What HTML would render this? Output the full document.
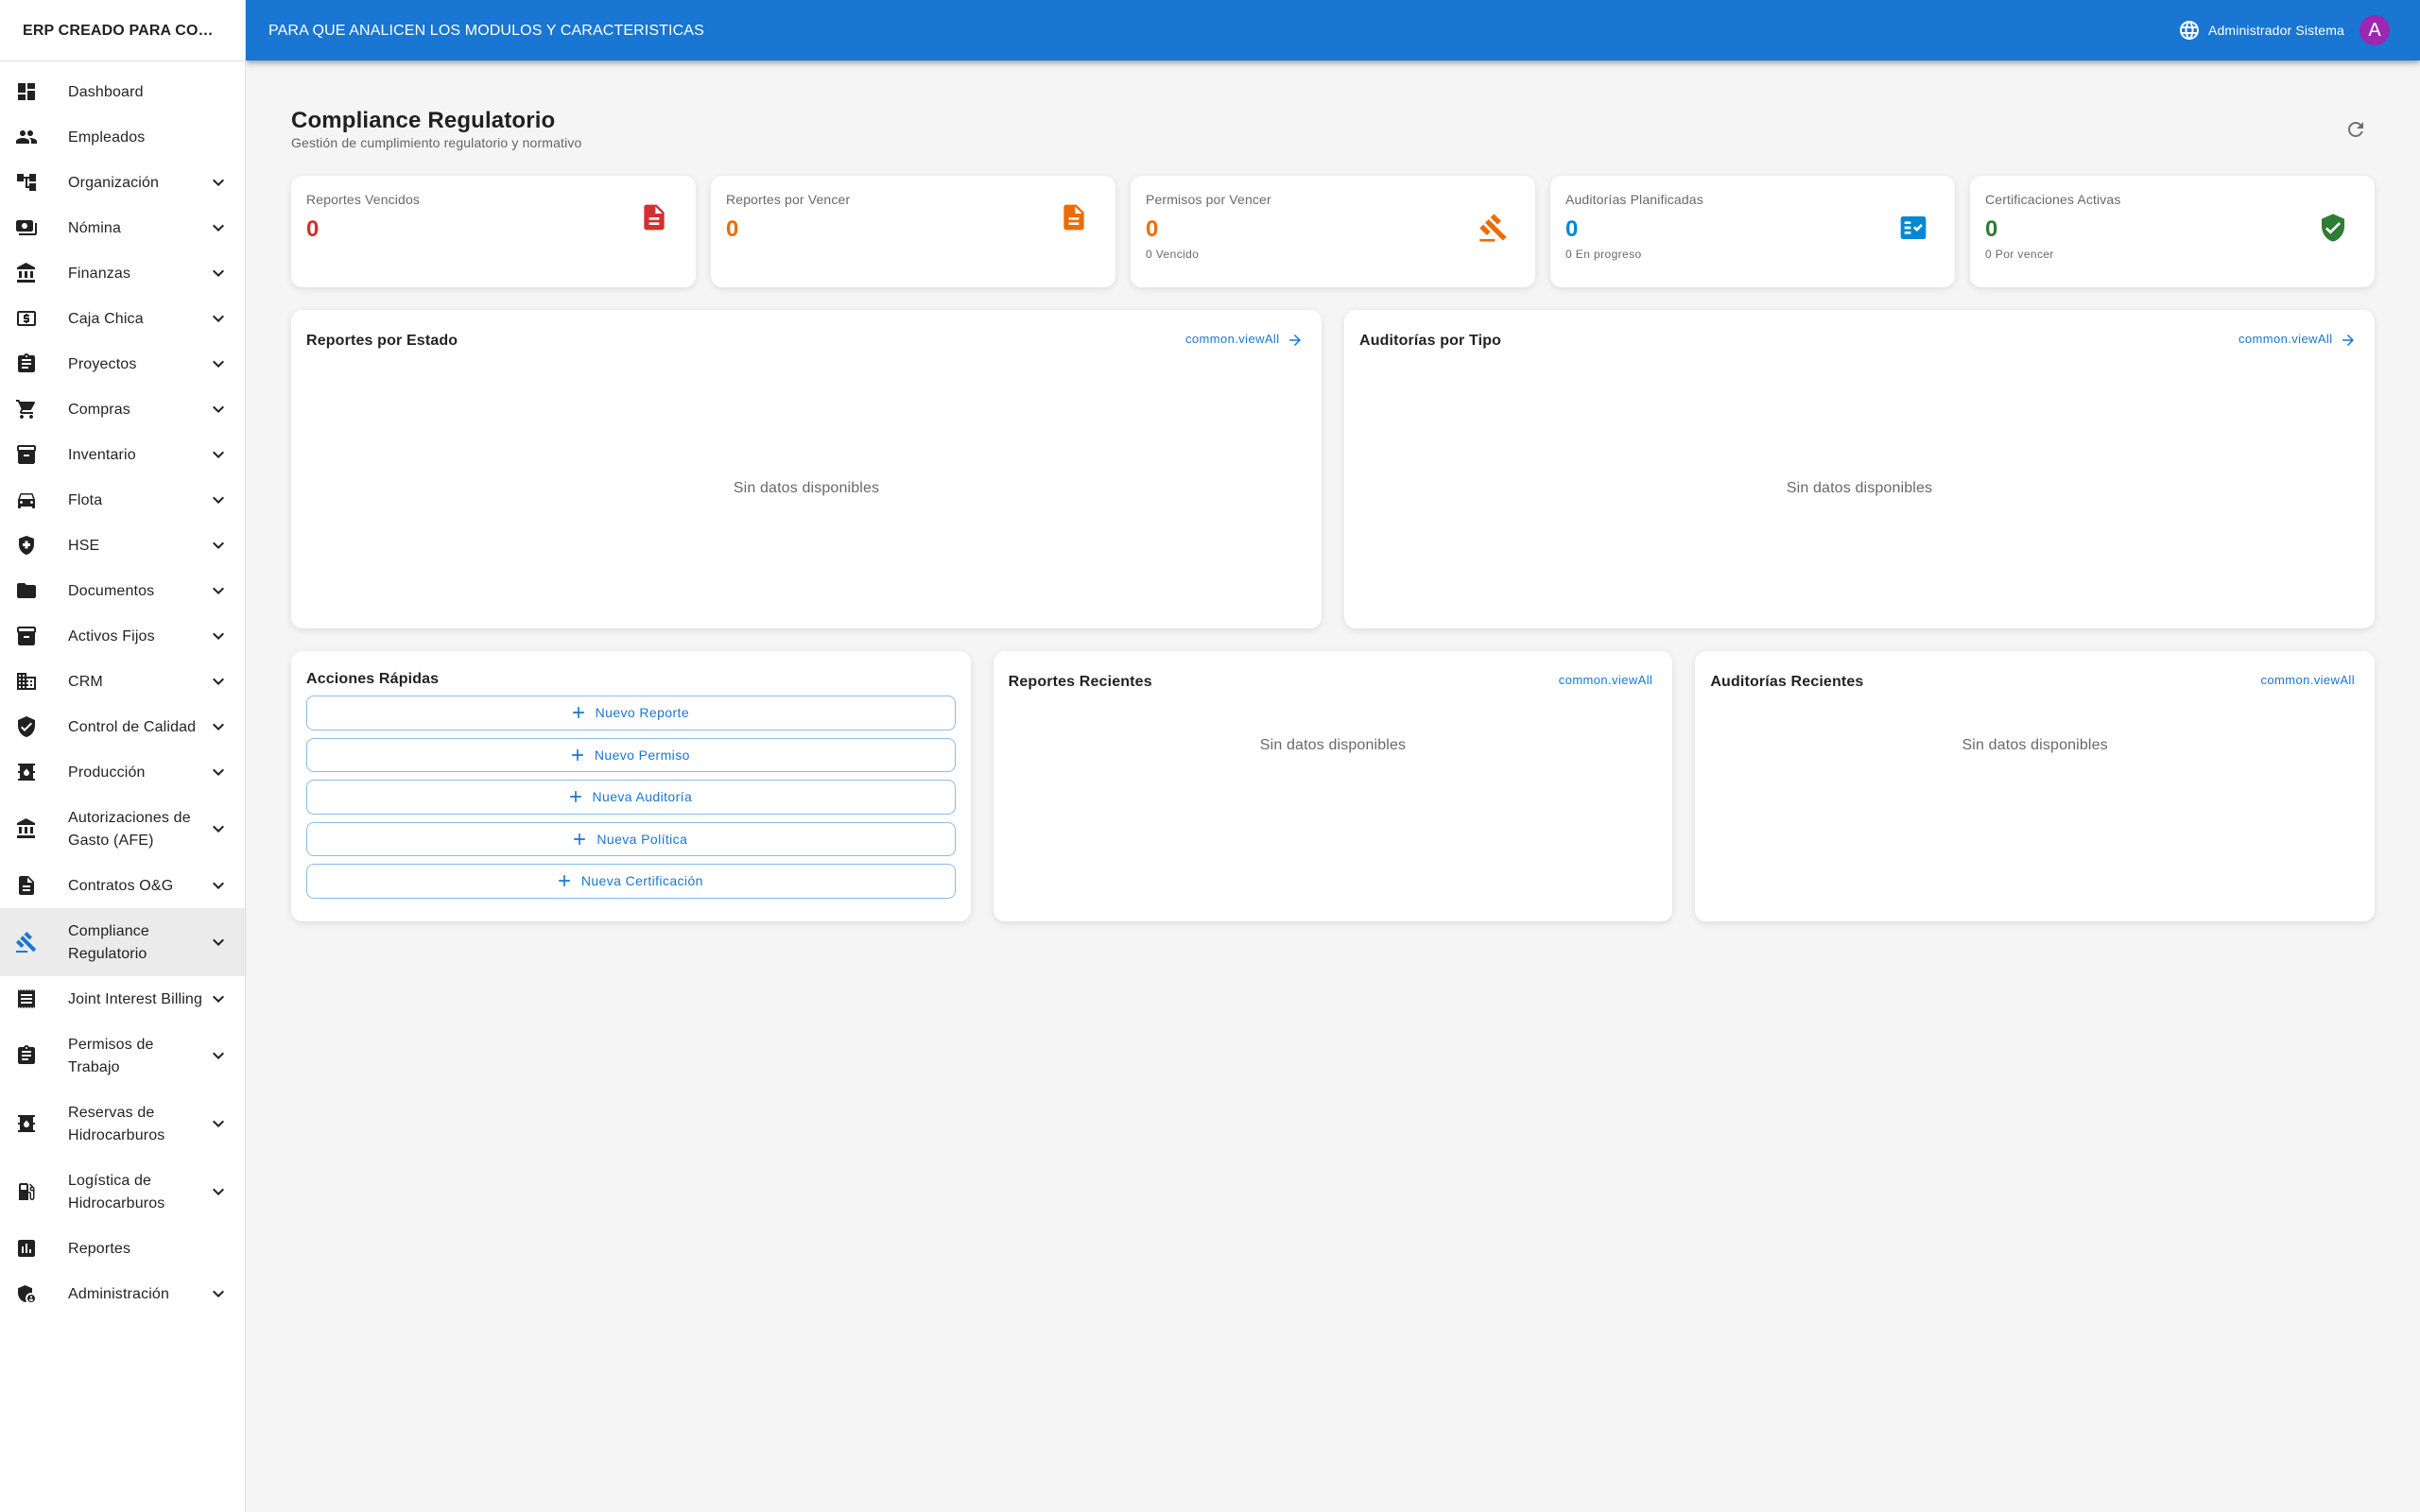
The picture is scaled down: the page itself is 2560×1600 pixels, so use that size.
<!DOCTYPE html>
<html lang="es">
<head>
<meta charset="utf-8">
<title>Compliance Regulatorio</title>
<style>
*{box-sizing:border-box;margin:0;padding:0}
html,body{width:2560px;height:1600px;overflow:hidden;background:#f5f5f5;font-family:"Liberation Sans",sans-serif;color:rgba(0,0,0,.87)}
svg{display:block;fill:currentColor}
.abs,.t{position:absolute}
.t{white-space:nowrap}
#side{position:absolute;left:0;top:0;width:260px;height:1600px;background:#fff;border-right:1px solid #e0e0e0;z-index:3}
#brand{position:absolute;left:0;top:0;width:259px;height:65px;border-bottom:1px solid #e0e0e0;padding-left:24px;line-height:65px;font-size:16px;font-weight:700;letter-spacing:.15px;white-space:nowrap}
#nav{position:absolute;left:0;top:73px;width:259px}
.i{position:relative;display:block;width:259px;height:48px}
.i.two{height:72px}
.i.sel{background:rgba(0,0,0,.08)}
.i .ic{position:absolute;left:16px;top:50%;margin-top:-12px;width:24px;height:24px;color:rgba(0,0,0,.87)}
.i.sel .ic{color:#1976d2}
.i .ch{position:absolute;left:219px;top:50%;margin-top:-12px;width:24px;height:24px;color:rgba(0,0,0,.87)}
.i .l{position:absolute;left:72px;top:13px;width:147px;font-size:16px;line-height:24px;letter-spacing:.15px}
.i .l.nw{white-space:nowrap}
#bar{position:absolute;left:260px;top:0;width:2300px;height:64px;background:#1976d2;color:#fff;box-shadow:0 2px 4px -1px rgba(0,0,0,.2),0 4px 5px 0 rgba(0,0,0,.14),0 1px 10px 0 rgba(0,0,0,.12);z-index:2}
.card{position:absolute;background:#fff;border-radius:12px;box-shadow:0 2px 8px rgba(0,0,0,.1)}
.lab{left:16px;top:15px;font-size:14px;line-height:20px;letter-spacing:.15px;color:rgba(0,0,0,.6)}
.num{left:16px;top:39px;font-size:24px;line-height:36px;font-weight:700}
.cap{left:16px;top:74px;font-size:12px;line-height:18px;letter-spacing:.4px;color:rgba(0,0,0,.6)}
.sic{position:absolute;left:368px;top:28px;width:32px;height:32px}
.sic.low{top:39px}
.h{font-size:16px;font-weight:700;line-height:24px;letter-spacing:.15px}
.va{font-size:13px;line-height:22px;letter-spacing:.4px;color:#1976d2}
.nd{font-size:16px;line-height:24px;letter-spacing:.15px;color:rgba(0,0,0,.6);text-align:center;left:0;right:0}
.btn{position:absolute;left:16px;width:686.67px;height:36.5px;border:1px solid rgba(25,118,210,.5);border-radius:8px;color:#1976d2;font-size:14px;line-height:34.5px;letter-spacing:.4px;display:flex;align-items:center;justify-content:center;padding-right:2px}
.btn svg{width:20px;height:20px;margin-right:8px;margin-left:-2px}
</style>
</head>
<body>
<svg width="0" height="0" style="position:absolute">
<defs>
<symbol id="dash" viewBox="0 0 24 24"><path d="M3 13h8V3H3v10zm0 8h8v-6H3v6zm10 0h8V11h-8v10zm0-18v6h8V3h-8z"/></symbol>
<symbol id="people" viewBox="0 0 24 24"><path d="M16 11c1.66 0 2.99-1.34 2.99-3S17.66 5 16 5c-1.66 0-3 1.34-3 3s1.34 3 3 3zm-8 0c1.66 0 2.99-1.34 2.99-3S9.66 5 8 5C6.34 5 5 6.34 5 8s1.34 3 3 3zm0 2c-2.33 0-7 1.17-7 3.5V19h14v-2.5c0-2.33-4.67-3.5-7-3.5zm8 0c-.29 0-.62.02-.97.05 1.16.84 1.97 1.97 1.97 3.45V19h6v-2.5c0-2.33-4.67-3.5-7-3.5z"/></symbol>
<symbol id="tree" viewBox="0 0 24 24"><path d="M22 11V3h-7v3H9V3H2v8h7V8h2v10h4v3h7v-8h-7v3h-2V8h2v3z"/></symbol>
<symbol id="pay" viewBox="0 0 24 24"><path d="M19 14V6c0-1.1-.9-2-2-2H3c-1.1 0-2 .9-2 2v8c0 1.1.9 2 2 2h14c1.1 0 2-.9 2-2zm-9-1c-1.66 0-3-1.34-3-3s1.34-3 3-3 3 1.34 3 3-1.34 3-3 3zm13-6v11c0 1.1-.9 2-2 2H4v-2h17V7h2z"/></symbol>
<symbol id="bank" viewBox="0 0 24 24"><path d="M4 10v7h3v-7H4zm6 0v7h3v-7h-3zM2 22h19v-3H2v3zm14-12v7h3v-7h-3zm-4.5-9L2 6v2h19V6l-9.5-5z"/></symbol>
<symbol id="atm" viewBox="0 0 24 24"><path d="M11 17h2v-1h1c.55 0 1-.45 1-1v-3c0-.55-.45-1-1-1h-3v-1h4V8h-2V7h-2v1h-1c-.55 0-1 .45-1 1v3c0 .55.45 1 1 1h3v1H9v2h2v1zm9-13H4c-1.11 0-1.99.89-1.99 2L2 18c0 1.11.89 2 2 2h16c1.11 0 2-.89 2-2V6c0-1.11-.89-2-2-2zm0 14H4V6h16v12z"/></symbol>
<symbol id="assign" viewBox="0 0 24 24"><path d="M19 3h-4.18C14.4 1.84 13.3 1 12 1c-1.3 0-2.4.84-2.82 2H5c-1.1 0-2 .9-2 2v14c0 1.1.9 2 2 2h14c1.1 0 2-.9 2-2V5c0-1.1-.9-2-2-2zm-7 0c.55 0 1 .45 1 1s-.45 1-1 1-1-.45-1-1 .45-1 1-1zm2 14H7v-2h7v2zm3-4H7v-2h10v2zm0-4H7V7h10v2z"/></symbol>
<symbol id="cart" viewBox="0 0 24 24"><path d="M7 18c-1.1 0-1.99.9-1.99 2S5.9 22 7 22s2-.9 2-2-.9-2-2-2zM1 2v2h2l3.6 7.59-1.35 2.45c-.16.28-.25.61-.25.96 0 1.1.9 2 2 2h12v-2H7.42c-.14 0-.25-.11-.25-.25l.03-.12.9-1.63h7.45c.75 0 1.41-.41 1.75-1.03l3.58-6.49c.08-.14.12-.31.12-.48 0-.55-.45-1-1-1H5.21l-.94-2H1zm16 16c-1.1 0-1.99.9-1.99 2s.89 2 1.99 2 2-.9 2-2-.9-2-2-2z"/></symbol>
<symbol id="inv" viewBox="0 0 24 24"><path d="M20 2H4c-1 0-2 .9-2 2v3.01c0 .72.43 1.34 1 1.69V20c0 1.1 1.1 2 2 2h14c.9 0 2-.9 2-2V8.7c.57-.35 1-.97 1-1.69V4c0-1.1-1-2-2-2zm-5 12H9v-2h6v2zm5-7H4V4l16-.02V7z"/></symbol>
<symbol id="car" viewBox="0 0 24 24"><path d="M18.92 6.01C18.72 5.42 18.16 5 17.5 5h-11c-.66 0-1.21.42-1.42 1.01L3 12v8c0 .55.45 1 1 1h1c.55 0 1-.45 1-1v-1h12v1c0 .55.45 1 1 1h1c.55 0 1-.45 1-1v-8l-2.08-5.99zM6.5 16c-.83 0-1.5-.67-1.5-1.5S5.67 13 6.5 13s1.5.67 1.5 1.5S7.33 16 6.5 16zm11 0c-.83 0-1.5-.67-1.5-1.5s.67-1.5 1.5-1.5 1.5.67 1.5 1.5-.67 1.5-1.5 1.5zM5 11l1.5-4.5h11L19 11H5z"/></symbol>
<symbol id="hse" viewBox="0 0 24 24"><path d="M10.5 13H8v-3h2.5V7.5h3V10H16v3h-2.5v2.5h-3V13zM12 2 4 5v6.09c0 5.05 3.41 9.76 8 10.91 4.59-1.15 8-5.86 8-10.91V5l-8-3z"/></symbol>
<symbol id="folder" viewBox="0 0 24 24"><path d="M10 4H4c-1.1 0-1.99.9-1.99 2L2 18c0 1.1.9 2 2 2h16c1.1 0 2-.9 2-2V8c0-1.1-.9-2-2-2h-8l-2-2z"/></symbol>
<symbol id="biz" viewBox="0 0 24 24"><path d="M12 7V3H2v18h20V7H12zM6 19H4v-2h2v2zm0-4H4v-2h2v2zm0-4H4V9h2v2zm0-4H4V5h2v2zm4 12H8v-2h2v2zm0-4H8v-2h2v2zm0-4H8V9h2v2zm0-4H8V5h2v2zm10 12h-8v-2h2v-2h-2v-2h2v-2h-2V9h8v10zm-2-8h-2v2h2v-2zm0 4h-2v2h2v-2z"/></symbol>
<symbol id="verified" viewBox="0 0 24 24"><path d="M12 1 3 5v6c0 5.55 3.84 10.74 9 12 5.16-1.26 9-6.45 9-12V5l-9-4zm-2 16-4-4 1.41-1.41L10 14.17l6.59-6.59L18 9l-8 8z"/></symbol>
<symbol id="barrel" viewBox="0 0 24 24"><path fill-rule="evenodd" d="M21 13v-2h-2V5h2V3H3v2h2v6H3v2h2v6H3v2h18v-2h-2v-6h2zm-9 3c-1.66 0-3-1.32-3-2.95 0-1.3.52-1.67 3-4.55 2.47 2.86 3 3.24 3 4.55 0 1.63-1.34 2.95-3 2.95z"/></symbol>
<symbol id="doc" viewBox="0 0 24 24"><path d="M14 2H6c-1.1 0-1.99.9-1.99 2L4 20c0 1.1.89 2 1.99 2H18c1.1 0 2-.9 2-2V8l-6-6zm2 16H8v-2h8v2zm0-4H8v-2h8v2zm-3-5V3.5L18.5 9H13z"/></symbol>
<symbol id="gavel" viewBox="0 0 24 24"><path d="M1 21h12v2H1zM5.245 8.07l2.83-2.827 14.14 14.142-2.828 2.828zM12.317 1l5.657 5.656-2.83 2.83-5.654-5.66zM3.825 9.485l5.657 5.657-2.828 2.828-5.657-5.657z"/></symbol>
<symbol id="receipt" viewBox="0 0 24 24"><path d="M18 17H6v-2h12v2zm0-4H6v-2h12v2zm0-4H6V7h12v2zM3 22l1.5-1.5L6 22l1.5-1.5L9 22l1.5-1.5L12 22l1.5-1.5L15 22l1.5-1.5L18 22l1.5-1.5L21 22V2l-1.5 1.5L18 2l-1.5 1.5L15 2l-1.5 1.5L12 2l-1.5 1.5L9 2 7.5 3.5 6 2 4.5 3.5 3 2v20z"/></symbol>
<symbol id="gas" viewBox="0 0 24 24"><path d="M19.77 7.23l.01-.01-3.72-3.72L15 4.56l2.11 2.11c-.94.36-1.61 1.26-1.61 2.33 0 1.38 1.12 2.5 2.5 2.5.36 0 .69-.08 1-.21v7.21c0 .55-.45 1-1 1s-1-.45-1-1V14c0-1.1-.9-2-2-2h-1V5c0-1.1-.9-2-2-2H6c-1.1 0-2 .9-2 2v16h10v-7.5h1.5v5c0 1.38 1.12 2.5 2.5 2.5s2.5-1.12 2.5-2.5V9c0-.69-.28-1.32-.73-1.77zM12 10H6V5h6v5zm6 0c-.55 0-1-.45-1-1s.45-1 1-1 1 .45 1 1-.45 1-1 1z"/></symbol>
<symbol id="assess" viewBox="0 0 24 24"><path d="M19 3H5c-1.1 0-2 .9-2 2v14c0 1.1.9 2 2 2h14c1.1 0 2-.9 2-2V5c0-1.1-.9-2-2-2zM9 17H7v-7h2v7zm4 0h-2V7h2v10zm4 0h-2v-4h2v4z"/></symbol>
<symbol id="admin" viewBox="0 0 24 24"><path d="M17 11c.34 0 .67.04 1 .09V6.27L10.5 3 3 6.27v4.91c0 4.54 3.2 8.79 7.5 9.82.55-.13 1.08-.32 1.6-.55-.69-.98-1.1-2.17-1.1-3.45 0-3.31 2.69-6 6-6z"/><path d="M17 13c-2.21 0-4 1.79-4 4s1.79 4 4 4 4-1.79 4-4-1.79-4-4-4zm0 1.38c.62 0 1.12.51 1.12 1.12s-.51 1.12-1.12 1.12-1.12-.51-1.12-1.12.5-1.12 1.12-1.12zm0 5.37c-.93 0-1.74-.46-2.24-1.17.05-.72 1.51-1.08 2.24-1.08s2.19.36 2.24 1.08c-.5.71-1.31 1.17-2.24 1.17z"/></symbol>
<symbol id="fact" viewBox="0 0 24 24"><path d="M20 3H4c-1.1 0-2 .9-2 2v14c0 1.1.9 2 2 2h16c1.1 0 2-.9 2-2V5c0-1.1-.9-2-2-2zM10 17H5v-2h5v2zm0-4H5v-2h5v2zm0-4H5V7h5v2zm4.82 6L12 12.16l1.41-1.41 1.41 1.42L17.99 9l1.42 1.42L14.82 15z"/></symbol>
<symbol id="more" viewBox="0 0 24 24"><path d="M16.59 8.59 12 13.17 7.41 8.59 6 10l6 6 6-6z"/></symbol>
<symbol id="refresh" viewBox="0 0 24 24"><path d="M17.65 6.35C16.2 4.9 14.21 4 12 4c-4.42 0-7.99 3.58-7.99 8s3.57 8 7.99 8c3.73 0 6.84-2.55 7.73-6h-2.08c-.82 2.33-3.04 4-5.65 4-3.31 0-6-2.69-6-6s2.69-6 6-6c1.66 0 3.14.69 4.22 1.78L13 11h7V4l-2.35 2.35z"/></symbol>
<symbol id="lang" viewBox="0 0 24 24"><path d="M11.99 2C6.47 2 2 6.48 2 12s4.47 10 9.99 10C17.52 22 22 17.52 22 12S17.52 2 11.99 2zm6.93 6h-2.95c-.32-1.25-.78-2.45-1.38-3.56 1.84.63 3.37 1.91 4.33 3.56zM12 4.04c.83 1.2 1.48 2.53 1.91 3.96h-3.82c.43-1.43 1.08-2.76 1.91-3.96zM4.26 14C4.1 13.36 4 12.69 4 12s.1-1.36.26-2h3.38c-.08.66-.14 1.32-.14 2 0 .68.06 1.34.14 2H4.26zm.82 2h2.95c.32 1.25.78 2.45 1.38 3.56-1.84-.63-3.37-1.9-4.33-3.56zm2.95-8H5.08c.96-1.66 2.49-2.93 4.33-3.56C8.81 5.55 8.35 6.75 8.03 8zM12 19.96c-.83-1.2-1.48-2.53-1.91-3.96h3.82c-.43 1.43-1.08 2.76-1.91 3.96zM14.34 14H9.66c-.09-.66-.16-1.32-.16-2 0-.68.07-1.35.16-2h4.68c.09.65.16 1.32.16 2 0 .68-.07 1.34-.16 2zm.25 5.56c.6-1.11 1.06-2.31 1.38-3.56h2.95c-.96 1.65-2.49 2.93-4.33 3.56zM16.36 14c.08-.66.14-1.32.14-2 0-.68-.06-1.34-.14-2h3.38c.16.64.26 1.31.26 2s-.1 1.36-.26 2h-3.38z"/></symbol>
<symbol id="arrow" viewBox="0 0 24 24"><path d="M12 4l-1.41 1.41L16.17 11H4v2h12.17l-5.58 5.59L12 20l8-8z"/></symbol>
<symbol id="add" viewBox="0 0 24 24"><path d="M19 13h-6v6h-2v-6H5v-2h6V5h2v6h6v2z"/></symbol>
</defs>
</svg>

<div id="side">
  <div id="brand">ERP CREADO PARA CO…</div>
  <div id="nav">
    <div class="i"><svg class="ic"><use href="#dash"/></svg><div class="l">Dashboard</div></div>
    <div class="i"><svg class="ic"><use href="#people"/></svg><div class="l">Empleados</div></div>
    <div class="i"><svg class="ic"><use href="#tree"/></svg><div class="l">Organización</div><svg class="ch"><use href="#more"/></svg></div>
    <div class="i"><svg class="ic"><use href="#pay"/></svg><div class="l">Nómina</div><svg class="ch"><use href="#more"/></svg></div>
    <div class="i"><svg class="ic"><use href="#bank"/></svg><div class="l">Finanzas</div><svg class="ch"><use href="#more"/></svg></div>
    <div class="i"><svg class="ic"><use href="#atm"/></svg><div class="l">Caja Chica</div><svg class="ch"><use href="#more"/></svg></div>
    <div class="i"><svg class="ic"><use href="#assign"/></svg><div class="l">Proyectos</div><svg class="ch"><use href="#more"/></svg></div>
    <div class="i"><svg class="ic"><use href="#cart"/></svg><div class="l">Compras</div><svg class="ch"><use href="#more"/></svg></div>
    <div class="i"><svg class="ic"><use href="#inv"/></svg><div class="l">Inventario</div><svg class="ch"><use href="#more"/></svg></div>
    <div class="i"><svg class="ic"><use href="#car"/></svg><div class="l">Flota</div><svg class="ch"><use href="#more"/></svg></div>
    <div class="i"><svg class="ic"><use href="#hse"/></svg><div class="l">HSE</div><svg class="ch"><use href="#more"/></svg></div>
    <div class="i"><svg class="ic"><use href="#folder"/></svg><div class="l">Documentos</div><svg class="ch"><use href="#more"/></svg></div>
    <div class="i"><svg class="ic"><use href="#inv"/></svg><div class="l">Activos Fijos</div><svg class="ch"><use href="#more"/></svg></div>
    <div class="i"><svg class="ic"><use href="#biz"/></svg><div class="l">CRM</div><svg class="ch"><use href="#more"/></svg></div>
    <div class="i"><svg class="ic"><use href="#verified"/></svg><div class="l nw">Control de Calidad</div><svg class="ch"><use href="#more"/></svg></div>
    <div class="i"><svg class="ic"><use href="#barrel"/></svg><div class="l">Producción</div><svg class="ch"><use href="#more"/></svg></div>
    <div class="i two"><svg class="ic"><use href="#bank"/></svg><div class="l">Autorizaciones de Gasto (AFE)</div><svg class="ch"><use href="#more"/></svg></div>
    <div class="i"><svg class="ic"><use href="#doc"/></svg><div class="l">Contratos O&amp;G</div><svg class="ch"><use href="#more"/></svg></div>
    <div class="i two sel"><svg class="ic"><use href="#gavel"/></svg><div class="l">Compliance Regulatorio</div><svg class="ch"><use href="#more"/></svg></div>
    <div class="i"><svg class="ic"><use href="#receipt"/></svg><div class="l nw">Joint Interest Billing</div><svg class="ch"><use href="#more"/></svg></div>
    <div class="i two"><svg class="ic"><use href="#assign"/></svg><div class="l">Permisos de Trabajo</div><svg class="ch"><use href="#more"/></svg></div>
    <div class="i two"><svg class="ic"><use href="#barrel"/></svg><div class="l">Reservas de Hidrocarburos</div><svg class="ch"><use href="#more"/></svg></div>
    <div class="i two"><svg class="ic"><use href="#gas"/></svg><div class="l">Logística de Hidrocarburos</div><svg class="ch"><use href="#more"/></svg></div>
    <div class="i"><svg class="ic"><use href="#assess"/></svg><div class="l">Reportes</div></div>
    <div class="i"><svg class="ic"><use href="#admin"/></svg><div class="l">Administración</div><svg class="ch"><use href="#more"/></svg></div>
  </div>
</div>

<div id="bar">
  <div class="t" style="left:24px;top:21px;font-size:16px;line-height:24px;letter-spacing:.12px">PARA QUE ANALICEN LOS MODULOS Y CARACTERISTICAS</div>
  <svg class="abs" style="left:2044px;top:20px;width:24px;height:24px"><use href="#lang"/></svg>
  <div class="t" style="left:2076px;top:22px;font-size:14px;line-height:20px;letter-spacing:.15px">Administrador Sistema</div>
  <div class="abs" style="left:2236px;top:16px;width:32px;height:32px;border-radius:50%;background:#9c27b0;text-align:center;font-size:20px;line-height:32px">A</div>
</div>

<div class="t" style="left:308px;top:109.5px;font-size:24px;line-height:36px;font-weight:700;letter-spacing:.15px">Compliance Regulatorio</div>
<div class="t" style="left:308px;top:140.5px;font-size:14px;line-height:20px;letter-spacing:.15px;color:rgba(0,0,0,.6)">Gestión de cumplimiento regulatorio y normativo</div>
<svg class="abs" style="left:2480px;top:125px;width:24px;height:24px;color:rgba(0,0,0,.54)"><use href="#refresh"/></svg>

<div class="card" style="left:308px;top:186px;width:428px;height:118px">
  <div class="t lab">Reportes Vencidos</div><div class="t num" style="color:#d32f2f">0</div>
  <svg class="sic" style="color:#d32f2f"><use href="#doc"/></svg>
</div>
<div class="card" style="left:752px;top:186px;width:428px;height:118px">
  <div class="t lab">Reportes por Vencer</div><div class="t num" style="color:#ed6c02">0</div>
  <svg class="sic" style="color:#ed6c02"><use href="#doc"/></svg>
</div>
<div class="card" style="left:1196px;top:186px;width:428px;height:118px">
  <div class="t lab">Permisos por Vencer</div><div class="t num" style="color:#ed6c02">0</div><div class="t cap">0 Vencido</div>
  <svg class="sic low" style="color:#ed6c02"><use href="#gavel"/></svg>
</div>
<div class="card" style="left:1640px;top:186px;width:428px;height:118px">
  <div class="t lab">Auditorías Planificadas</div><div class="t num" style="color:#0288d1">0</div><div class="t cap">0 En progreso</div>
  <svg class="sic low" style="color:#0288d1"><use href="#fact"/></svg>
</div>
<div class="card" style="left:2084px;top:186px;width:428px;height:118px">
  <div class="t lab">Certificaciones Activas</div><div class="t num" style="color:#2e7d32">0</div><div class="t cap">0 Por vencer</div>
  <svg class="sic low" style="color:#2e7d32"><use href="#verified"/></svg>
</div>

<div class="card" style="left:308px;top:328px;width:1090px;height:337px">
  <div class="t h" style="left:16px;top:20.5px">Reportes por Estado</div>
  <div class="t va" style="left:946px;top:20px">common.viewAll</div>
  <svg class="abs" style="left:1053px;top:23px;width:18px;height:18px;color:#1976d2"><use href="#arrow"/></svg>
  <div class="t nd" style="top:176.5px">Sin datos disponibles</div>
</div>
<div class="card" style="left:1422px;top:328px;width:1090px;height:337px">
  <div class="t h" style="left:16px;top:20.5px">Auditorías por Tipo</div>
  <div class="t va" style="left:946px;top:20px">common.viewAll</div>
  <svg class="abs" style="left:1053px;top:23px;width:18px;height:18px;color:#1976d2"><use href="#arrow"/></svg>
  <div class="t nd" style="top:176.5px">Sin datos disponibles</div>
</div>

<div class="card" style="left:308px;top:689px;width:718.67px;height:286px">
  <div class="t h" style="left:16px;top:17.5px">Acciones Rápidas</div>
  <div class="btn" style="top:47px"><svg><use href="#add"/></svg>Nuevo Reporte</div>
  <div class="btn" style="top:91.5px"><svg><use href="#add"/></svg>Nuevo Permiso</div>
  <div class="btn" style="top:136px"><svg><use href="#add"/></svg>Nueva Auditoría</div>
  <div class="btn" style="top:180.5px"><svg><use href="#add"/></svg>Nueva Política</div>
  <div class="btn" style="top:225px"><svg><use href="#add"/></svg>Nueva Certificación</div>
</div>
<div class="card" style="left:1050.67px;top:689px;width:718.67px;height:286px">
  <div class="t h" style="left:16px;top:20.5px">Reportes Recientes</div>
  <div class="t va" style="right:21px;top:20px">common.viewAll</div>
  <div class="t nd" style="top:87.5px">Sin datos disponibles</div>
</div>
<div class="card" style="left:1793.33px;top:689px;width:718.67px;height:286px">
  <div class="t h" style="left:16px;top:20.5px">Auditorías Recientes</div>
  <div class="t va" style="right:21px;top:20px">common.viewAll</div>
  <div class="t nd" style="top:87.5px">Sin datos disponibles</div>
</div>
</body>
</html>
